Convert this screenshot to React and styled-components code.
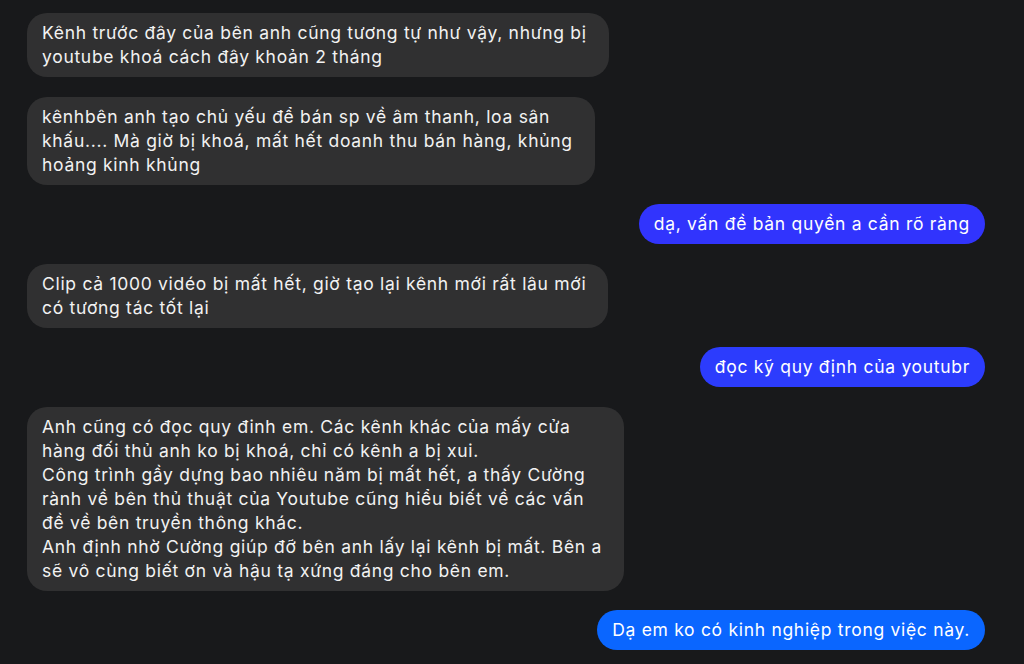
import React from 'react'
import styled, { createGlobalStyle } from 'styled-components'

const GlobalStyle = createGlobalStyle`
  html, body {
    margin: 0;
    padding: 0;
    background: #18191b;
  }
  body {
    font-family: Inter, "Noto Sans", "Liberation Sans", sans-serif;
    -webkit-font-smoothing: antialiased;
  }
`

const Thread = styled.div`
  display: flex;
  flex-direction: column;
  gap: 19.5px;
  width: 1024px;
  height: 664px;
  box-sizing: border-box;
  padding: 13px 39px 0 27px;
  background: #18191b;
  overflow: hidden;
`

const Row = styled.div`
  display: flex;
  justify-content: ${p => (p.$mine ? 'flex-end' : 'flex-start')};
`

const Bubble = styled.div`
  width: fit-content;
  box-sizing: border-box;
  padding: ${p => (p.$mine ? '8px 15px' : '8px 22px 8px 15px')};
  border-radius: 20px;
  background: ${p => p.$bg || '#303031'};
  color: ${p => (p.$mine ? '#ffffff' : '#f2f2f2')};
  font-size: 17.5px;
  line-height: 24px;
  letter-spacing: 0.7px;
  white-space: nowrap;
`

const messages = [
  {
    lines: [
      'Kênh trước đây của bên anh cũng tương tự như vậy, nhưng bị',
      'youtube khoá cách đây khoản 2 tháng',
    ],
  },
  {
    lines: [
      'kênhbên anh tạo chủ yếu để bán sp về âm thanh, loa sân',
      'khấu.... Mà giờ bị khoá, mất hết doanh thu bán hàng, khủng',
      'hoảng kinh khủng',
    ],
  },
  { mine: true, bg: '#3134fd', lines: ['dạ, vấn đề bản quyền a cần rõ ràng'] },
  {
    lines: [
      'Clip cả 1000 vidéo bị mất hết, giờ tạo lại kênh mới rất lâu mới',
      'có tương tác tốt lại',
    ],
  },
  { mine: true, bg: '#2c3cfd', lines: ['đọc kỹ quy định của youtubr'] },
  {
    lines: [
      'Anh cũng có đọc quy đinh em. Các kênh khác của mấy cửa',
      'hàng đối thủ anh ko bị khoá, chỉ có kênh a bị xui.',
      'Công trình gầy dựng bao nhiêu năm bị mất hết, a thấy Cường',
      'rành về bên thủ thuật của Youtube cũng hiểu biết về các vấn',
      'đề về bên truyền thông khác.',
      'Anh định nhờ Cường giúp đỡ bên anh lấy lại kênh bị mất. Bên a',
      'sẽ vô cùng biết ơn và hậu tạ xứng đáng cho bên em.',
    ],
  },
  { mine: true, bg: '#0a66ff', lines: ['Dạ em ko có kinh nghiệp trong việc này.'] },
]

export default function App() {
  return (
    <>
      <GlobalStyle />
      <Thread>
        {messages.map((m, i) => (
          <Row key={i} $mine={m.mine}>
            <Bubble $mine={m.mine} $bg={m.bg}>
              {m.lines.map((l, j) => (
                <div key={j}>{l}</div>
              ))}
            </Bubble>
          </Row>
        ))}
      </Thread>
    </>
  )
}
